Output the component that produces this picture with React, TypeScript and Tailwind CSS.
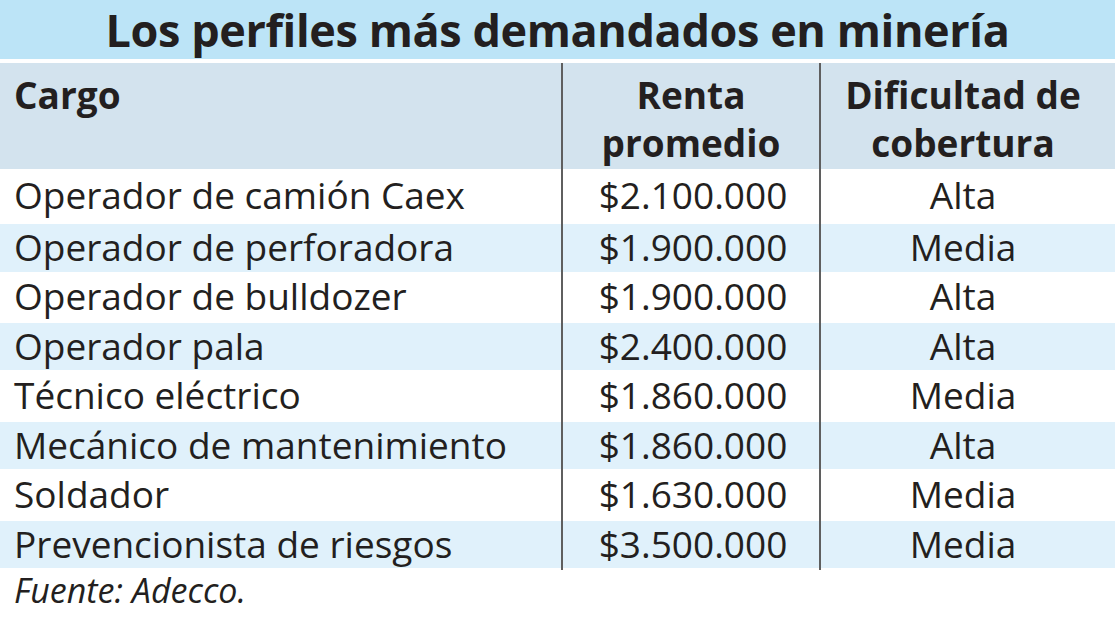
const rows = [
  { cargo: "Operador de camión Caex", renta: "$2.100.000", dif: "Alta" },
  { cargo: "Operador de perforadora", renta: "$1.900.000", dif: "Media" },
  { cargo: "Operador de bulldozer", renta: "$1.900.000", dif: "Alta" },
  { cargo: "Operador pala", renta: "$2.400.000", dif: "Alta" },
  { cargo: "Técnico eléctrico", renta: "$1.860.000", dif: "Media" },
  { cargo: "Mecánico de mantenimiento", renta: "$1.860.000", dif: "Alta" },
  { cargo: "Soldador", renta: "$1.630.000", dif: "Media" },
  { cargo: "Prevencionista de riesgos", renta: "$3.500.000", dif: "Media" },
];

const rowHeights = ["h-[55px]", "h-[48px]", "h-[51px]", "h-[47px]", "h-[52px]", "h-[47px]", "h-[52px]", "h-[47px]"];

export default function App() {
  return (
    <div className="w-[1115px] h-[626px] bg-white text-[#231f20] font-['Open_Sans',sans-serif] overflow-hidden">
      {/* Title band */}
      <div className="h-[59px] bg-[#bce4f7] flex items-center justify-center">
        <h1 className="text-[45px] font-bold leading-[56px] tracking-[-0.4px] whitespace-nowrap">Los perfiles más demandados en minería</h1>
      </div>
      <div className="h-[4px] bg-white" />

      {/* Header */}
      <div className="grid grid-cols-[561px_258px_296px] h-[106px] bg-[#d3e3ee] text-[37px] font-bold leading-[48px]">
        <div className="pl-[14px] pt-[8px]">Cargo</div>
        <div className="border-l-2 border-[#5f5f5f] text-center pt-[8px]">
          Renta
          <br />
          promedio
        </div>
        <div className="border-l-2 border-[#5f5f5f] text-center pt-[8px] pr-[10px]">
          Dificultad de
          <br />
          cobertura
        </div>
      </div>

      {/* Rows */}
      {rows.map((r, i) => (
        <div
          key={r.cargo}
          className={`grid grid-cols-[561px_258px_296px] text-[37px] leading-[46px] ${rowHeights[i]} ${i % 2 === 1 ? "bg-[#e0f1fb]" : "bg-white"}`}
        >
          <div className="pl-[14px] pb-[3px] flex items-center">{r.cargo}</div>
          <div className="border-l-2 border-[#5f5f5f] pb-[3px] pl-[4px] flex items-center justify-center">{r.renta}</div>
          <div className="border-l-2 border-[#5f5f5f] pb-[3px] flex items-center justify-center pr-[10px]">{r.dif}</div>
        </div>
      ))}

      {/* Source */}
      <p className="pl-[14px] text-[34px] italic leading-[44px]">Fuente: Adecco.</p>
    </div>
  );
}
